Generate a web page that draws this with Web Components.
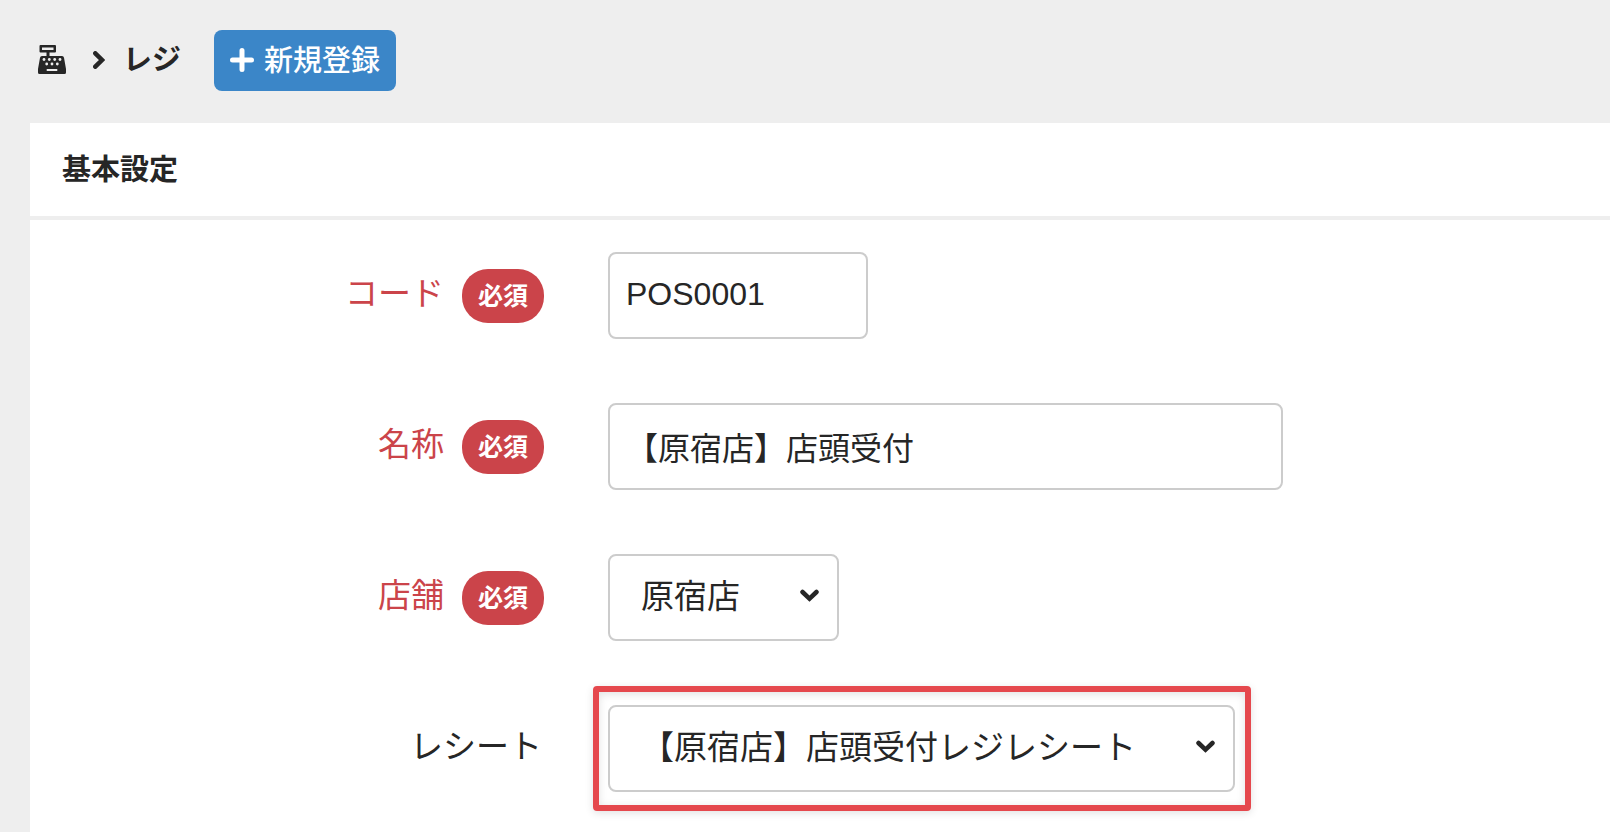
<!DOCTYPE html>
<html lang="ja">
<head>
<meta charset="utf-8">
<meta name="viewport" content="width=device-width, initial-scale=1">
<title>レジ</title>
<style>
  body {
    margin: 0;
    background: #eee;
    color: #262626;
    font-family: "Liberation Sans", "Noto Sans CJK JP", sans-serif;
    --danger: #cb444a;
    --primary: #3b86c8;
    --border: #ccc;
    --marker: #e5484d;
  }
</style>
</head>
<body>
<page-header>
  レジ
  <add-button slot="action">新規登録</add-button>
</page-header>
<main>
  <setting-panel heading="基本設定">
    <form-row label="コード" required value="POS0001" style="--field-width: 260px"></form-row>
    <form-row label="名称" required value="【原宿店】店頭受付" style="--field-width: 675px"></form-row>
    <form-row label="店舗" required type="select" value="原宿店"></form-row>
    <form-row label="レシート" type="select" value="【原宿店】店頭受付レジレシート" marked></form-row>
  </setting-panel>
</main>

<script>
class PageHeader extends HTMLElement {
  constructor() {
    super();
    this.attachShadow({ mode: "open" });
    this.shadowRoot.innerHTML = `
      <style>
        :host {
          display: block;
          padding: 30px 30px 32px 38px;
        }
        header {
          display: flex;
          align-items: center;
          gap: 33px;
        }
        nav {
          display: flex;
          align-items: center;
          font-size: 29px;
          line-height: 40px;
          font-weight: 700;
          padding-bottom: 2px;
        }
        a {
          display: flex;
          color: inherit;
        }
        .arrow {
          margin: 0 18px 0 27px;
        }
      </style>
      <header>
        <nav aria-label="パンくず">
          <a href="#" aria-label="ホーム">
            <svg width="28" height="29" viewBox="0 0 28 29">
              <path fill="currentColor" fill-rule="evenodd" d="M2.500 0h14.500q1 0 1 1v5.500q0 1-1 1h-5.500V11H24q1.700 0 2 1.700L28 24v3.500q0 1.500-1.500 1.500h-25Q0 29 0 27.500V24l2-11.300Q2.300 11 4 11h4.500V7.500h-6q-1 0-1-1V1q0-1 1-1zM4 2.500V5h11.500V2.500z"/>
              <g fill="#eee">
                <circle cx="6" cy="14.500" r="1.400"/><circle cx="11.300" cy="14.500" r="1.400"/><circle cx="16.700" cy="14.500" r="1.400"/><circle cx="22" cy="14.500" r="1.400"/>
                <circle cx="8.700" cy="19" r="1.400"/><circle cx="14" cy="19" r="1.400"/><circle cx="19.300" cy="19" r="1.400"/>
                <rect x="8.700" y="24" width="10.600" height="2" rx=".5"/>
              </g>
            </svg>
          </a>
          <svg class="arrow" width="12" height="18" viewBox="0 0 12 18" aria-hidden="true">
            <path d="M2.300 2.300 9 9l-6.700 6.700" fill="none" stroke="currentColor" stroke-width="4.500" stroke-linecap="round"/>
          </svg>
          <slot></slot>
        </nav>
        <slot name="action"></slot>
      </header>
    `;
  }
}
customElements.define("page-header", PageHeader);

class AddButton extends HTMLElement {
  constructor() {
    super();
    this.attachShadow({ mode: "open" });
    this.shadowRoot.innerHTML = `
      <style>
        :host {
          display: block;
        }
        button {
          display: flex;
          align-items: center;
          gap: 10px;
          border: 0;
          border-radius: 8px;
          padding: 11px 16px 10px;
          background: var(--primary);
          color: #fff;
          font: inherit;
          font-weight: 500;
          font-size: 29px;
          line-height: 40px;
          cursor: pointer;
        }
        svg {
          margin-bottom: 2px;
        }
      </style>
      <button type="button">
        <svg width="24" height="24" viewBox="0 0 24 24" aria-hidden="true">
          <path d="M12 2.500v19M2.500 12h19" stroke="#fff" stroke-width="5" stroke-linecap="round"/>
        </svg>
        <slot></slot>
      </button>
    `;
  }
}
customElements.define("add-button", AddButton);

class SettingPanel extends HTMLElement {
  constructor() {
    super();
    this.attachShadow({ mode: "open" });
    this.shadowRoot.innerHTML = `
      <style>
        :host {
          display: block;
          margin-left: 30px;
          background: #fff;
        }
        h2 {
          margin: 0;
          padding: 27px 32px 26px;
          border-bottom: 4px solid #eee;
          font-size: 29px;
          line-height: 40px;
          font-weight: 700;
        }
        form {
          display: grid;
          gap: 64px;
          padding: 32px 0 64px;
        }
      </style>
      <section>
        <h2></h2>
        <form><slot></slot></form>
      </section>
    `;
  }

  connectedCallback() {
    this.shadowRoot.querySelector("h2").textContent = this.getAttribute("heading");
  }
}
customElements.define("setting-panel", SettingPanel);

class FormRow extends HTMLElement {
  constructor() {
    super();
    this.attachShadow({ mode: "open" });
    this.shadowRoot.innerHTML = `
      <style>
        :host {
          display: grid;
          grid-template-columns: minmax(200px, 514px) 1fr;
          column-gap: 64px;
          align-items: center;
        }
        label {
          display: flex;
          justify-content: flex-end;
          align-items: baseline;
          gap: 18px;
          font-size: 33px;
          line-height: 48px;
        }
        :host([required]) label {
          color: var(--danger);
        }
        :host(:not([required])) label {
          padding: 0 2px 4px 0;
        }
        .badge {
          padding: 0 16px;
          border-radius: 26px;
          background: var(--danger);
          color: #fff;
          font-size: 25px;
          line-height: 54px;
          font-weight: 700;
        }
        .field {
          display: grid;
          justify-self: start;
          align-items: center;
          position: relative;
        }
        input, select {
          grid-area: 1 / 1;
          box-sizing: border-box;
          height: 87px;
          margin: 0;
          border: 2px solid var(--border);
          border-radius: 8px;
          background: #fff;
          color: inherit;
          font: inherit;
        }
        input {
          width: var(--field-width);
          padding: 0 16px 2px;
          font-size: 32px;
        }
        select {
          appearance: none;
          padding: 0 97px 2px 31px;
          font-size: 33px;
        }
        .caret {
          grid-area: 1 / 1;
          justify-self: end;
          margin: 0 20px 4px 0;
          pointer-events: none;
        }
        /* red frame around the highlighted field */
        :host([marked]) .field::after {
          content: "";
          position: absolute;
          inset: -19px -16px -19px -15px;
          border: 6px solid var(--marker);
          border-radius: 4px;
          box-shadow: 0 2px 8px rgba(0, 0, 0, 0.12), inset 0 2px 8px rgba(0, 0, 0, 0.12);
          pointer-events: none;
        }
      </style>
      <label for="control"><span class="text"></span></label>
      <div class="field"></div>
    `;
  }

  connectedCallback() {
    const label = this.shadowRoot.querySelector("label");
    const field = this.shadowRoot.querySelector(".field");
    const value = this.getAttribute("value");
    this.shadowRoot.querySelector(".text").textContent = this.getAttribute("label");

    if (this.hasAttribute("required")) {
      const badge = document.createElement("span");
      badge.className = "badge";
      badge.textContent = "必須";
      label.appendChild(badge);
    }

    if (this.getAttribute("type") === "select") {
      field.innerHTML = `
        <select id="control"></select>
        <svg class="caret" width="19" height="13" viewBox="0 0 19 13" aria-hidden="true">
          <path d="M2.500 3l7 6.700 7-6.700" fill="none" stroke="currentColor" stroke-width="4.500" stroke-linecap="round"/>
        </svg>
      `;
      field.querySelector("select").add(new Option(value));
    } else {
      field.innerHTML = `<input id="control" type="text">`;
      field.querySelector("input").value = value;
    }
  }
}
customElements.define("form-row", FormRow);
</script>
</body>
</html>
